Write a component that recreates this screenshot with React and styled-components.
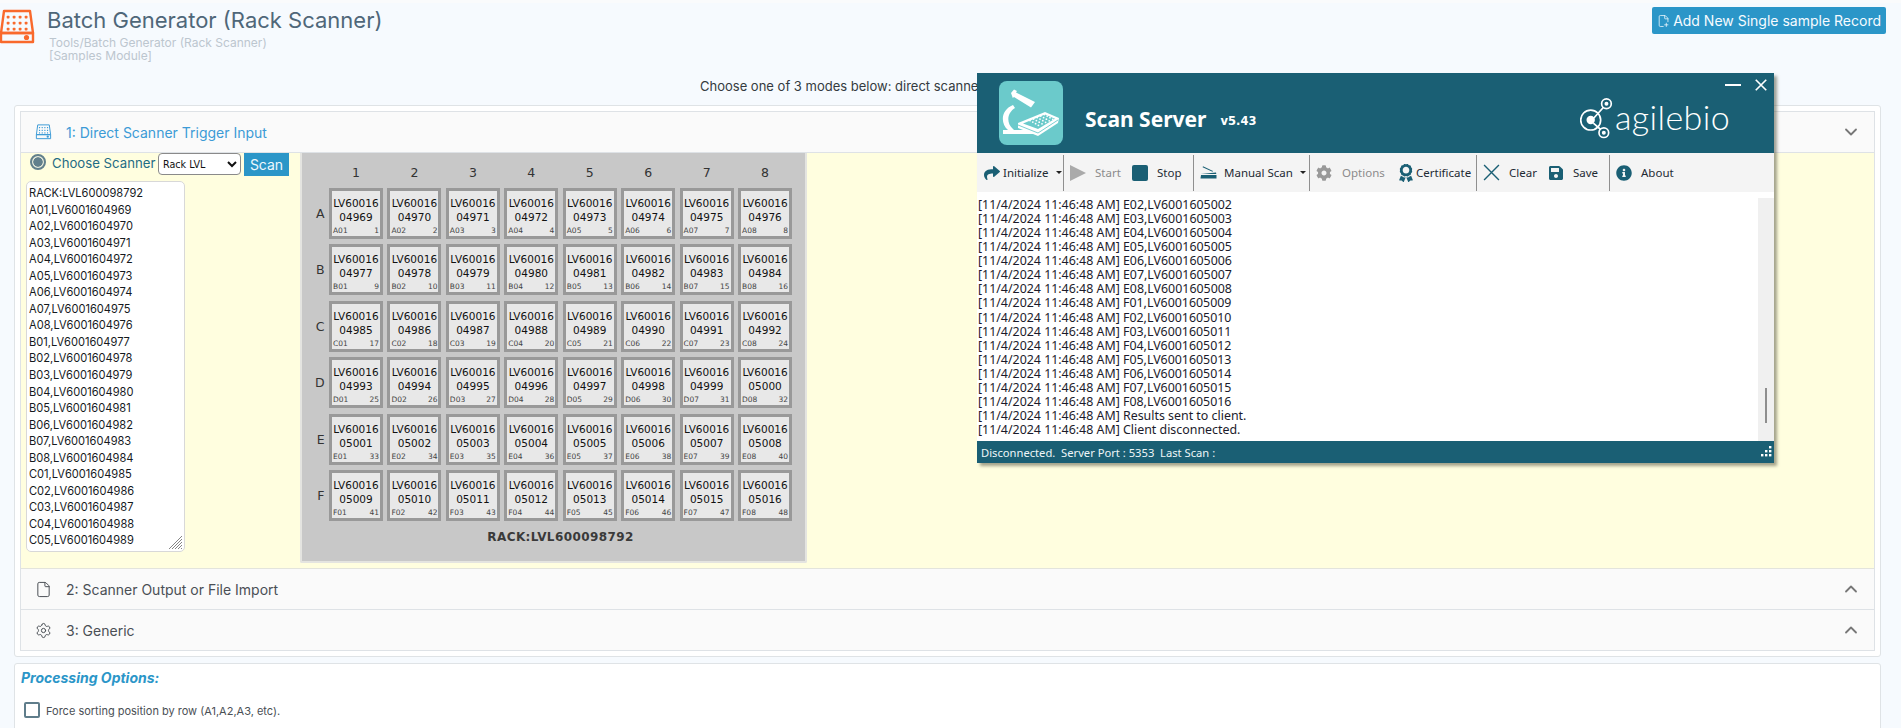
import React from "react";
import styled, { createGlobalStyle } from "styled-components";
import { ChevronDown, ChevronUp, File, Settings, FilePlus2 } from "lucide-react";
import { FaShare, FaCog, FaSave, FaInfoCircle, FaAward } from "react-icons/fa";

const TEAL = "#1a5f74";
const UI = `Inter, "Liberation Sans", sans-serif`;
const WIN = `"Noto Sans", "Open Sans", sans-serif`;
const VERD = `"DejaVu Sans", Verdana, sans-serif`;

const Global = createGlobalStyle`
  html, body { margin: 0; height: 728px; overflow: hidden; background: #f6fafe; }
  #root { height: 728px; overflow: hidden; }
  * { box-sizing: border-box; }
`;

const Page = styled.div`
  position: relative;
  width: 1901px;
  height: 728px;
  overflow: hidden;
  font-family: ${UI};
`;
const Header = styled.header`
  height: 73px;
  display: flex;
  align-items: flex-start;
  justify-content: space-between;
  border-top: 3px solid #fafbfc;
  padding-right: 15px;
`;
const HeaderLeft = styled.div`
  display: flex;
  align-items: flex-start;
`;
const HeaderIcon = styled.span`
  margin: 6px 0 0 -2px;
`;
const TitleBlock = styled.div`
  margin-left: 11px;
  padding-top: 2px;
`;
const Title = styled.h1`
  margin: 0;
  font-size: 22px;
  line-height: 31px;
  font-weight: 400;
  color: #4f6779;
`;
const Crumb = styled.div`
  margin-left: 2px;
  font-size: 12px;
  line-height: 13px;
  color: #bcc6cf;
`;
const PrimaryButton = styled.button`
  display: flex;
  align-items: center;
  gap: 3px;
  height: 27px;
  margin-top: 4px;
  width: 234px;
  padding: 0 5px;
  border: 0;
  border-radius: 2px;
  background: #2b96c8;
  color: #f6fbff;
  font: 400 14px ${UI};
  white-space: nowrap;
`;
const ModeLine = styled.p`
  margin: 0;
  height: 32px;
  padding: 1px 0 0 700px;
  font-size: 13px;
  line-height: 24px;
  color: #343a40;
`;
const Main = styled.main`
  padding: 0 20px 0 14px;
`;
const Card = styled.section`
  background: #fff;
  border: 1px solid #dfe3e6;
  border-radius: 3px;
  padding: 5px;
`;
const Accordion = styled.div`
  border: 1px solid #dee2e6;
`;
const AccHeader = styled.div`
  display: flex;
  align-items: center;
  height: 41px;
  padding: 0 13px 0 14px;
  background: #fafafa;
  border-bottom: 1px solid #dee2e6;
  font-size: 14px;
  color: ${(p) => (p.$active ? "#3c9bd6" : "#4a4f55")};
  &:last-child { border-bottom: 0; height: 40px; }
`;
const AccIcon = styled.span`
  display: flex;
  justify-content: center;
  width: 18px;
  margin: 0 14px 0 -1px;
`;
const AccLabel = styled.span`
  flex: 1;
`;
const AccBody = styled.div`
  display: flex;
  height: 416px;
  background: #fffedf;
  border-bottom: 1px solid #e3e4dc;
`;
const LeftCol = styled.div`
  width: 279px;
  flex: none;
`;
const ScanRow = styled.div`
  display: flex;
  align-items: flex-start;
  height: 23px;
  padding-left: 9px;
`;
const Radio = styled.span`
  flex: none;
  width: 16px;
  height: 16px;
  margin-top: 1px;
  border: 2px solid #62808c;
  border-radius: 50%;
  background: radial-gradient(circle, #62808c 0 4.4px, #e8ecdc 5px);
`;
const ChooseLabel = styled.label`
  width: 102px;
  flex: none;
  margin: 1px 0 0 6px;
  font-size: 13.2px;
  line-height: 18px;
  color: #1f6c84;
  white-space: nowrap;
`;
const ScannerSelect = styled.select`
  width: 83px;
  height: 22px;
  flex: none;
  margin-left: 4px;
  padding: 0;
  border: 1px solid #8a8a8a;
  border-radius: 4px;
  background: #fff;
  font: 400 9.6px ${VERD};
  color: #111;
`;
const ScanButton = styled.button`
  width: 45px;
  height: 23px;
  flex: none;
  margin-left: 3px;
  border: 0;
  background: #2b96c8;
  color: #eef8fd;
  font: 400 14px ${UI};
  padding: 0;
`;
const ListBox = styled.div`
  position: relative;
  width: 159px;
  height: 371px;
  margin: 5px 0 0 5px;
  padding: 3px 2px;
  overflow: hidden;
  background: #fff;
  border: 1px solid #d8d8d8;
  border-radius: 5px;
  font-size: 11.1px;
  line-height: 16.55px;
  color: #15191d;
`;
const Grip = styled.svg`
  position: absolute;
  right: 1px;
  bottom: 1px;
`;
const Rack = styled.div`
  width: 507px;
  height: 410px;
  border: solid #e4e4e0;
  border-width: 0 2px 2px 2px;
  border-radius: 0 0 2px 2px;
  background: #c8c8c8;
  padding-top: 8px;
  display: grid;
  grid-template-columns: 22.55px repeat(8, 54px);
  grid-template-rows: 21.6px repeat(6, 51px) auto;
  column-gap: 4.45px;
  row-gap: 5.4px;
  font-family: ${VERD};
  color: #333;
`;
const ColHead = styled.div`
  text-align: center;
  font-size: 12.5px;
  line-height: 23px;
`;
const RowHead = styled.div`
  text-align: right;
  font-size: 12.5px;
  line-height: 51px;
`;
const Well = styled.div`
  display: flex;
  flex-direction: column;
  align-items: center;
  padding: 5px 1px 0;
  border: 3px solid #999;
  background: #e8e8e8;
  font-size: 10.5px;
  line-height: 14px;
  color: #111;
`;
const WellFoot = styled.div`
  align-self: stretch;
  display: flex;
  justify-content: space-between;
  margin-top: auto;
  font-size: 7.5px;
  line-height: 11px;
  color: #444;
`;
const RackLabel = styled.div`
  grid-column: 2 / -1;
  margin-top: 2px;
  text-align: center;
  font-size: 12px;
  line-height: 18px;
  font-weight: 700;
  letter-spacing: 0.4px;
  color: #3a3a3a;
`;
const OptionsCard = styled(Card)`
  margin-top: 6px;
  height: 120px;
  padding: 5px 6px;
`;
const OptionsTitle = styled.div`
  font-size: 14px;
  line-height: 17px;
  font-weight: 700;
  font-style: italic;
  color: #2b96c8;
`;
const OptionRow = styled.div`
  display: flex;
  align-items: flex-end;
  margin: 16px 0 0 3px;
`;
const Check = styled.span`
  width: 16px;
  height: 16px;
  border: 2px solid #5f7d8b;
  border-radius: 2px;
  background: #fff;
`;
const CheckLabel = styled.span`
  margin-left: 6px;
  font-size: 11px;
  line-height: 14px;
  color: #4a4f55;
`;

/* floating Scan Server window */
const ScanWindow = styled.div`
  position: absolute;
  left: 977px;
  top: 73px;
  width: 797px;
  height: 390px;
  display: flex;
  flex-direction: column;
  background: #fff;
  box-shadow: 3px 3px 3px rgba(90, 90, 70, 0.55);
  font-family: ${WIN};
`;
const WinHead = styled.div`
  position: relative;
  display: flex;
  align-items: center;
  height: 80px;
  flex: none;
  padding-left: 22px;
  background: ${TEAL};
  color: #fff;
`;
const LogoTile = styled.div`
  width: 64px;
  height: 64px;
  flex: none;
  border-radius: 8px;
  background: #6bcacb;
`;
const WinTitle = styled.div`
  margin: 11px 0 0 22px;
  font-size: 21px;
  font-weight: 700;
  white-space: nowrap;
`;
const WinVersion = styled.div`
  margin: 15px 0 0 14px;
  font-family: ${VERD};
  font-size: 11.5px;
  font-weight: 700;
`;
const Agile = styled.div`
  display: flex;
  align-items: center;
  margin: 12px 0 0 auto;
  padding-right: 44px;
`;
const AgileWord = styled.span`
  font: 300 34px/40px Lato, "Open Sans", sans-serif;
  letter-spacing: 0.4px;
  margin: -4px 0 0 1px;
`;
const WinControls = styled.div`
  position: absolute;
  top: 6px;
  right: 7px;
  display: flex;
  align-items: center;
  gap: 14px;
`;
const MinBar = styled.span`
  width: 16px;
  height: 2.5px;
  background: #fff;
`;
const Toolbar = styled.div`
  display: flex;
  align-items: center;
  height: 39px;
  flex: none;
  padding-left: 7px;
  background: #f4f4f4;
`;
const Tool = styled.div`
  display: flex;
  align-items: center;
  width: ${(p) => p.$w}px;
  flex: none;
  gap: ${(p) => p.$gap ?? 9}px;
  font-size: 11.5px;
  color: ${(p) => (p.$off ? "#8b8b8b" : "#1e2a33")};
  white-space: nowrap;
`;
const Sep = styled.span`
  width: 1px;
  height: 36px;
  margin: 0 6px 0 0;
  flex: none;
  background: #8f8f8f;
`;
const Caret = styled.span`
  width: 0;
  height: 0;
  margin-left: ${(p) => p.$ml}px;
  border: 3px solid transparent;
  border-top: 3px solid #222;
  border-bottom: 0;
`;
const LogArea = styled.div`
  flex: 1;
  display: flex;
  min-height: 0;
`;
const LogText = styled.div`
  flex: 1;
  padding: 6px 0 0 1px;
  overflow: hidden;
  font-size: 12.4px;
  line-height: 14.06px;
  color: #1b1b2b;
  white-space: nowrap;
`;
const Scrollbar = styled.div`
  position: relative;
  width: 16px;
  margin-top: 6px;
  background: #f0f0f0;
`;
const Thumb = styled.div`
  position: absolute;
  left: 7px;
  top: 190px;
  width: 2px;
  height: 35px;
  background: #8e8e8e;
`;
const StatusBar = styled.div`
  display: flex;
  align-items: center;
  justify-content: space-between;
  height: 22px;
  flex: none;
  padding: 0 2px 0 4px;
  background: ${TEAL};
  color: #eef6f8;
  font-size: 11.2px;
  white-space: pre;
`;

const ROWS = ["A", "B", "C", "D", "E", "F"];
const pad = (n) => String(n).padStart(2, "0");
const wells = [];
ROWS.forEach((r, ri) => {
  for (let c = 1; c <= 8; c++) {
    const idx = ri * 8 + c;
    const code = String(4968 + idx).padStart(5, "0");
    wells.push({ r, c, idx, pos: `${r}${pad(c)}`, code });
  }
});
const listLines = ["RACK:LVL600098792", ...wells.slice(0, 21).map((w) => `${w.pos},LV60016${w.code}`)];
const logLines = [
  ...wells.slice(33).map((w) => `[11/4/2024 11:46:48 AM] ${w.pos},LV60016${w.code}`),
  "[11/4/2024 11:46:48 AM] Results sent to client.",
  "[11/4/2024 11:46:48 AM] Client disconnected.",
];

const RackIcon = ({ color, w, h, sw }) => (
  <svg width={w} height={h} viewBox="0 0 36 36" fill="none" stroke={color} strokeWidth={sw}>
    <path d="M5 2h26l3 22H2z" strokeLinejoin="round" />
    <path d="M2 24h32v9H2z" strokeLinejoin="round" />
    <g fill={color} stroke="none">
      {[8, 14, 20].map((y) =>
        [9, 15, 21, 27].map((x) => <rect key={`${x}-${y}`} x={x - 1.3} y={y - 1.3} width="2.8" height="2.8" rx="0.8" />)
      )}
      <circle cx="27.5" cy="28.5" r="2.6" />
    </g>
  </svg>
);

const Microscope = () => (
  <svg width="64" height="64" viewBox="0 0 64 64">
    <g fill="#fff">
      <path d="M12 12l3-3.5 3 1.5-1 1.6L36 21l-4 5.5-17-10.5-1.2 1z" />
      <path d="M14 24l2 3c-8 5-9 15-2 21l1 1h19v4H4v-4h5C1 42 2 29 14 24z" />
      <path d="M19 42L46 31l14 6-1 5-20 13-20-8z" />
    </g>
    <path d="M24 42.5L46 33.5l10 4.3L39 48z" fill="#6bcacb" />
    <g fill="#fff">
      {[0, 1, 2, 3].map((i) =>
        [0, 1, 2, 3, 4].map((j) => (
          <circle key={`${i}${j}`} cx={31 + j * 3.6 + i * 2.8} cy={41.5 - j * 1.5 + i * 1.6 - 2} r="0.9" />
        ))
      )}
    </g>
    <path d="M19 44l20 8 20-13" fill="none" stroke="#6bcacb" strokeWidth="0.9" />
  </svg>
);

const AgileMark = () => (
  <svg width="34" height="42" viewBox="0 0 32 40" fill="none" stroke="#fff" strokeWidth="1.6">
    <circle cx="10" cy="21" r="9.5" />
    <circle cx="10" cy="21" r="3.2" fill="#fff" />
    <circle cx="25" cy="5.5" r="4.6" />
    <circle cx="22.5" cy="33" r="4.6" />
    <circle cx="25" cy="5.5" r="1.1" fill="#fff" />
    <circle cx="22.5" cy="33" r="1.1" fill="#fff" />
    <path d="M13 19L22 9M12.5 24l7 6" />
  </svg>
);

const ResizeDots = () => (
  <svg width="12" height="12" viewBox="0 0 12 12" fill="#fff">
    {[[9, 0], [5, 4], [9, 4], [1, 8], [5, 8], [9, 8]].map(([x, y]) => (
      <rect key={`${x}${y}`} x={x} y={y} width="2.4" height="2.4" />
    ))}
  </svg>
);

const ScannerGlyph = () => (
  <svg width="17" height="13" viewBox="0 0 17 13" fill={TEAL}>
    <path d="M1 9h15.5v3.5H.5z" />
    <path d="M.8 8L16 6.5l.3 1.4H1z" />
    <path d="M3 .3l10 4.7-.5.8L2.6 1.2z" />
  </svg>
);

const CrossGlyph = ({ size, color, sw }) => (
  <svg width={size} height={size} viewBox="0 0 16 16" stroke={color} strokeWidth={sw} fill="none">
    <path d="M1 1l14 14M15 1L1 15" />
  </svg>
);

export default function App() {
  return (
    <Page>
      <Global />
      <Header>
        <HeaderLeft>
          <HeaderIcon>
            <RackIcon color="#f9692c" w="38" h="36" sw="2.4" />
          </HeaderIcon>
          <TitleBlock>
            <Title>Batch Generator (Rack Scanner)</Title>
            <Crumb>Tools/Batch Generator (Rack Scanner)</Crumb>
            <Crumb>[Samples Module]</Crumb>
          </TitleBlock>
        </HeaderLeft>
        <PrimaryButton>
          <FilePlus2 size={16} strokeWidth={1.4} />
          Add New Single sample Record
        </PrimaryButton>
      </Header>
      <ModeLine>Choose one of 3 modes below: direct scanner</ModeLine>
      <Main>
        <Card>
          <Accordion>
            <AccHeader $active>
              <AccIcon><RackIcon color="#3c9bd6" w="17" h="16" sw="2.2" /></AccIcon>
              <AccLabel>1: Direct Scanner Trigger Input</AccLabel>
              <ChevronDown size={20} color="#777" strokeWidth={2.2} />
            </AccHeader>
            <AccBody>
              <LeftCol>
                <ScanRow>
                  <Radio />
                  <ChooseLabel>Choose Scanner</ChooseLabel>
                  <ScannerSelect defaultValue="Rack LVL">
                    <option>Rack LVL</option>
                  </ScannerSelect>
                  <ScanButton>Scan</ScanButton>
                </ScanRow>
                <ListBox>
                  {listLines.map((l) => (
                    <div key={l}>{l}</div>
                  ))}
                  <Grip width="15" height="15" viewBox="0 0 15 15" stroke="#777" strokeWidth="0.9">
                    <path d="M1 14L14 1M4 14L14 4M7 14l7-7M10 14l4-4M13 14l1-1" />
                  </Grip>
                </ListBox>
              </LeftCol>
              <Rack>
                <div />
                {[1, 2, 3, 4, 5, 6, 7, 8].map((c) => (
                  <ColHead key={c}>{c}</ColHead>
                ))}
                {ROWS.map((r) => (
                  <React.Fragment key={r}>
                    <RowHead>{r}</RowHead>
                    {wells
                      .filter((w) => w.r === r)
                      .map((w) => (
                        <Well key={w.pos}>
                          <span>LV60016</span>
                          <span>{w.code}</span>
                          <WellFoot>
                            <span>{w.pos}</span>
                            <span>{w.idx}</span>
                          </WellFoot>
                        </Well>
                      ))}
                  </React.Fragment>
                ))}
                <RackLabel>RACK:LVL600098792</RackLabel>
              </Rack>
            </AccBody>
            <AccHeader>
              <AccIcon><File size={17} strokeWidth={1.4} /></AccIcon>
              <AccLabel>2: Scanner Output or File Import</AccLabel>
              <ChevronUp size={20} color="#777" strokeWidth={2.2} />
            </AccHeader>
            <AccHeader>
              <AccIcon><Settings size={17} strokeWidth={1.4} /></AccIcon>
              <AccLabel>3: Generic</AccLabel>
              <ChevronUp size={20} color="#777" strokeWidth={2.2} />
            </AccHeader>
          </Accordion>
        </Card>
        <OptionsCard>
          <OptionsTitle>Processing Options:</OptionsTitle>
          <OptionRow>
            <Check />
            <CheckLabel>Force sorting position by row (A1,A2,A3, etc).</CheckLabel>
          </OptionRow>
        </OptionsCard>
      </Main>

      <ScanWindow>
        <WinHead>
          <LogoTile><Microscope /></LogoTile>
          <WinTitle>Scan Server</WinTitle>
          <WinVersion>v5.43</WinVersion>
          <Agile>
            <AgileMark />
            <AgileWord>agilebio</AgileWord>
          </Agile>
          <WinControls>
            <MinBar />
            <CrossGlyph size={12} color="#fff" sw={2.2} />
          </WinControls>
        </WinHead>
        <Toolbar>
          <Tool $w={79} $gap={3}><FaShare size={16} color={TEAL} />Initialize<Caret $ml={5} /></Tool>
          <Sep />
          <Tool $off $w={62}><svg width="16" height="16" viewBox="0 0 16 16" fill="#aaa"><path d="M0 0l16 8-16 8z" /></svg>Start</Tool>
          <Tool $w={61}><svg width="16" height="16" viewBox="0 0 16 16"><rect width="16" height="16" rx="2" fill={TEAL} /></svg>Stop</Tool>
          <Sep />
          <Tool $w={109} $gap={7}><ScannerGlyph />Manual Scan<Caret $ml={0} /></Tool>
          <Sep />
          <Tool $off $w={81} $gap={10}><FaCog size={16} color="#999" />Options</Tool>
          <Tool $w={79} $gap={1}><FaAward size={18} color={TEAL} />Certificate</Tool>
          <Sep />
          <Tool $w={65}><CrossGlyph size={17} color={TEAL} sw={1.3} />Clear</Tool>
          <Tool $w={61}><FaSave size={16} color={TEAL} />Save</Tool>
          <Sep />
          <Tool $w={60}><FaInfoCircle size={16} color={TEAL} />About</Tool>
        </Toolbar>
        <LogArea>
          <LogText>
            {logLines.map((l) => (
              <div key={l}>{l}</div>
            ))}
          </LogText>
          <Scrollbar><Thumb /></Scrollbar>
        </LogArea>
        <StatusBar>
          <span>Disconnected.  Server Port : 5353  Last Scan :</span>
          <ResizeDots />
        </StatusBar>
      </ScanWindow>
    </Page>
  );
}
